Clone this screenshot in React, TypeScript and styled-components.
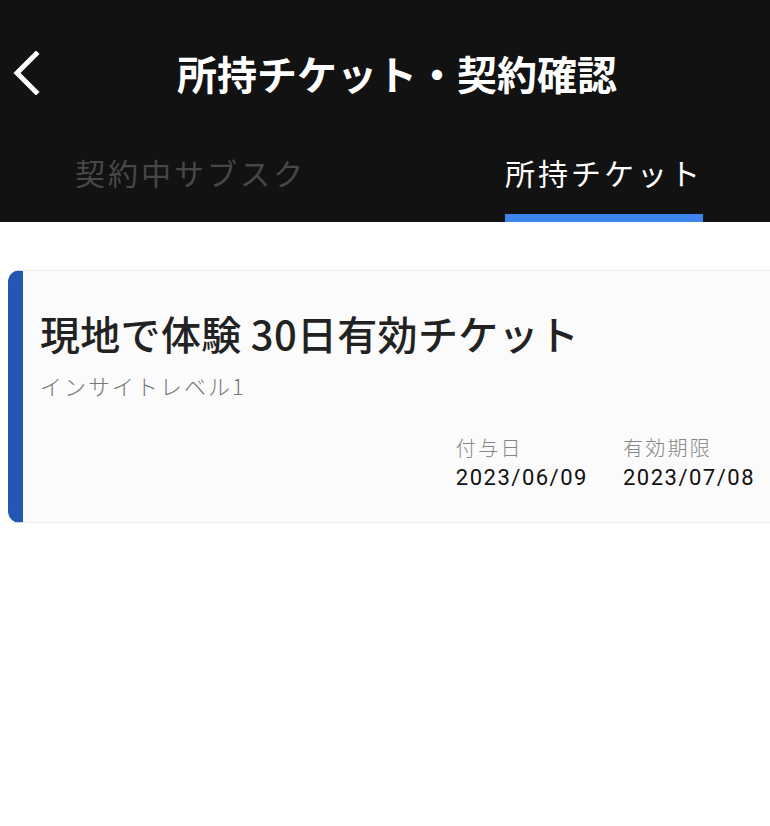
import React from 'react';
import styled, { createGlobalStyle } from 'styled-components';

const GlobalStyle = createGlobalStyle`
  html, body {
    margin: 0;
    padding: 0;
    background: #ffffff;
    overflow-x: hidden;
  }
  body {
    font-family: "Noto Sans CJK JP", "Noto Sans", sans-serif;
  }
`;

const Header = styled.header`
  background: #121212;
`;

const TopBar = styled.div`
  height: 146px;
  display: grid;
  grid-template-columns: 52px 1fr 28px;
  align-items: center;
`;

const BackButton = styled.button`
  background: none;
  border: 0;
  padding: 0 0 0 12px;
  height: 48px;
  display: flex;
  align-items: center;
  cursor: pointer;
`;

const Title = styled.h1`
  margin: 0;
  text-align: center;
  color: #ffffff;
  font-size: 40px;
  font-weight: 700;
  line-height: 1.2;
`;

const TabBar = styled.nav`
  display: flex;
  height: 76px;
  padding-left: 75px;
  gap: 199px;
`;

const Tab = styled.div<{ $active?: boolean }>`
  display: flex;
  flex-direction: column;
  align-items: center;
  color: ${(p) => (p.$active ? '#ffffff' : '#474747')};
  font-size: 30px;
  font-weight: 400;
  letter-spacing: 3px;
  line-height: 44px;
  padding-top: 4px;
  cursor: pointer;
`;

const Indicator = styled.span<{ $active?: boolean }>`
  margin-top: auto;
  align-self: stretch;
  height: 8px;
  background: ${(p) => (p.$active ? '#3d85ec' : 'transparent')};
`;

const Content = styled.main`
  padding: 48px 0 0 8px;
  margin-right: -24px;
`;

const Card = styled.section`
  background: #fbfbfb;
  border: 1px solid #ececec;
  border-left: 15px solid #2457b3;
  border-radius: 12px;
  padding: 38px 38px 29px 17px;
`;

const CardTitle = styled.h2`
  margin: 0;
  font-size: 40px;
  font-weight: 500;
  line-height: 48px;
  letter-spacing: 0.3px;
  color: #222222;
`;

const CardSub = styled.div`
  margin-top: 13px;
  font-size: 22px;
  font-weight: 300;
  line-height: 30px;
  letter-spacing: 2px;
  color: #777777;
`;

const Dates = styled.div`
  margin-top: 35px;
  display: flex;
  justify-content: flex-end;
  gap: 35px;
`;

const DateCol = styled.div`
  display: flex;
  flex-direction: column;
  gap: 2px;
`;

const DateLabel = styled.span`
  font-size: 20px;
  font-weight: 300;
  line-height: 26px;
  letter-spacing: 2.3px;
  color: #858585;
`;

const DateValue = styled.span`
  font-family: Roboto, "Noto Sans", sans-serif;
  font-size: 22px;
  line-height: 30px;
  letter-spacing: 1.5px;
  color: #111111;
`;

const ChevronLeft = () => (
  <svg width="30" height="44" viewBox="0 0 30 44" fill="none">
    <path d="M24 3 L5 22 L24 41" stroke="#ffffff" strokeWidth="5" strokeLinecap="square" />
  </svg>
);

const tabs = [
  { label: '契約中サブスク', active: false },
  { label: '所持チケット', active: true },
];

const dates = [
  { label: '付与日', value: '2023/06/09' },
  { label: '有効期限', value: '2023/07/08' },
];

const App = () => (
  <>
    <GlobalStyle />
    <Header>
      <TopBar>
        <BackButton aria-label="戻る">
          <ChevronLeft />
        </BackButton>
        <Title>所持チケット・契約確認</Title>
        <span />
      </TopBar>
      <TabBar>
        {tabs.map((t) => (
          <Tab key={t.label} $active={t.active}>
            {t.label}
            <Indicator $active={t.active} />
          </Tab>
        ))}
      </TabBar>
    </Header>
    <Content>
      <Card>
        <CardTitle>現地で体験 30日有効チケット</CardTitle>
        <CardSub>インサイトレベル1</CardSub>
        <Dates>
          {dates.map((d) => (
            <DateCol key={d.label}>
              <DateLabel>{d.label}</DateLabel>
              <DateValue>{d.value}</DateValue>
            </DateCol>
          ))}
        </Dates>
      </Card>
    </Content>
  </>
);

export default App;
